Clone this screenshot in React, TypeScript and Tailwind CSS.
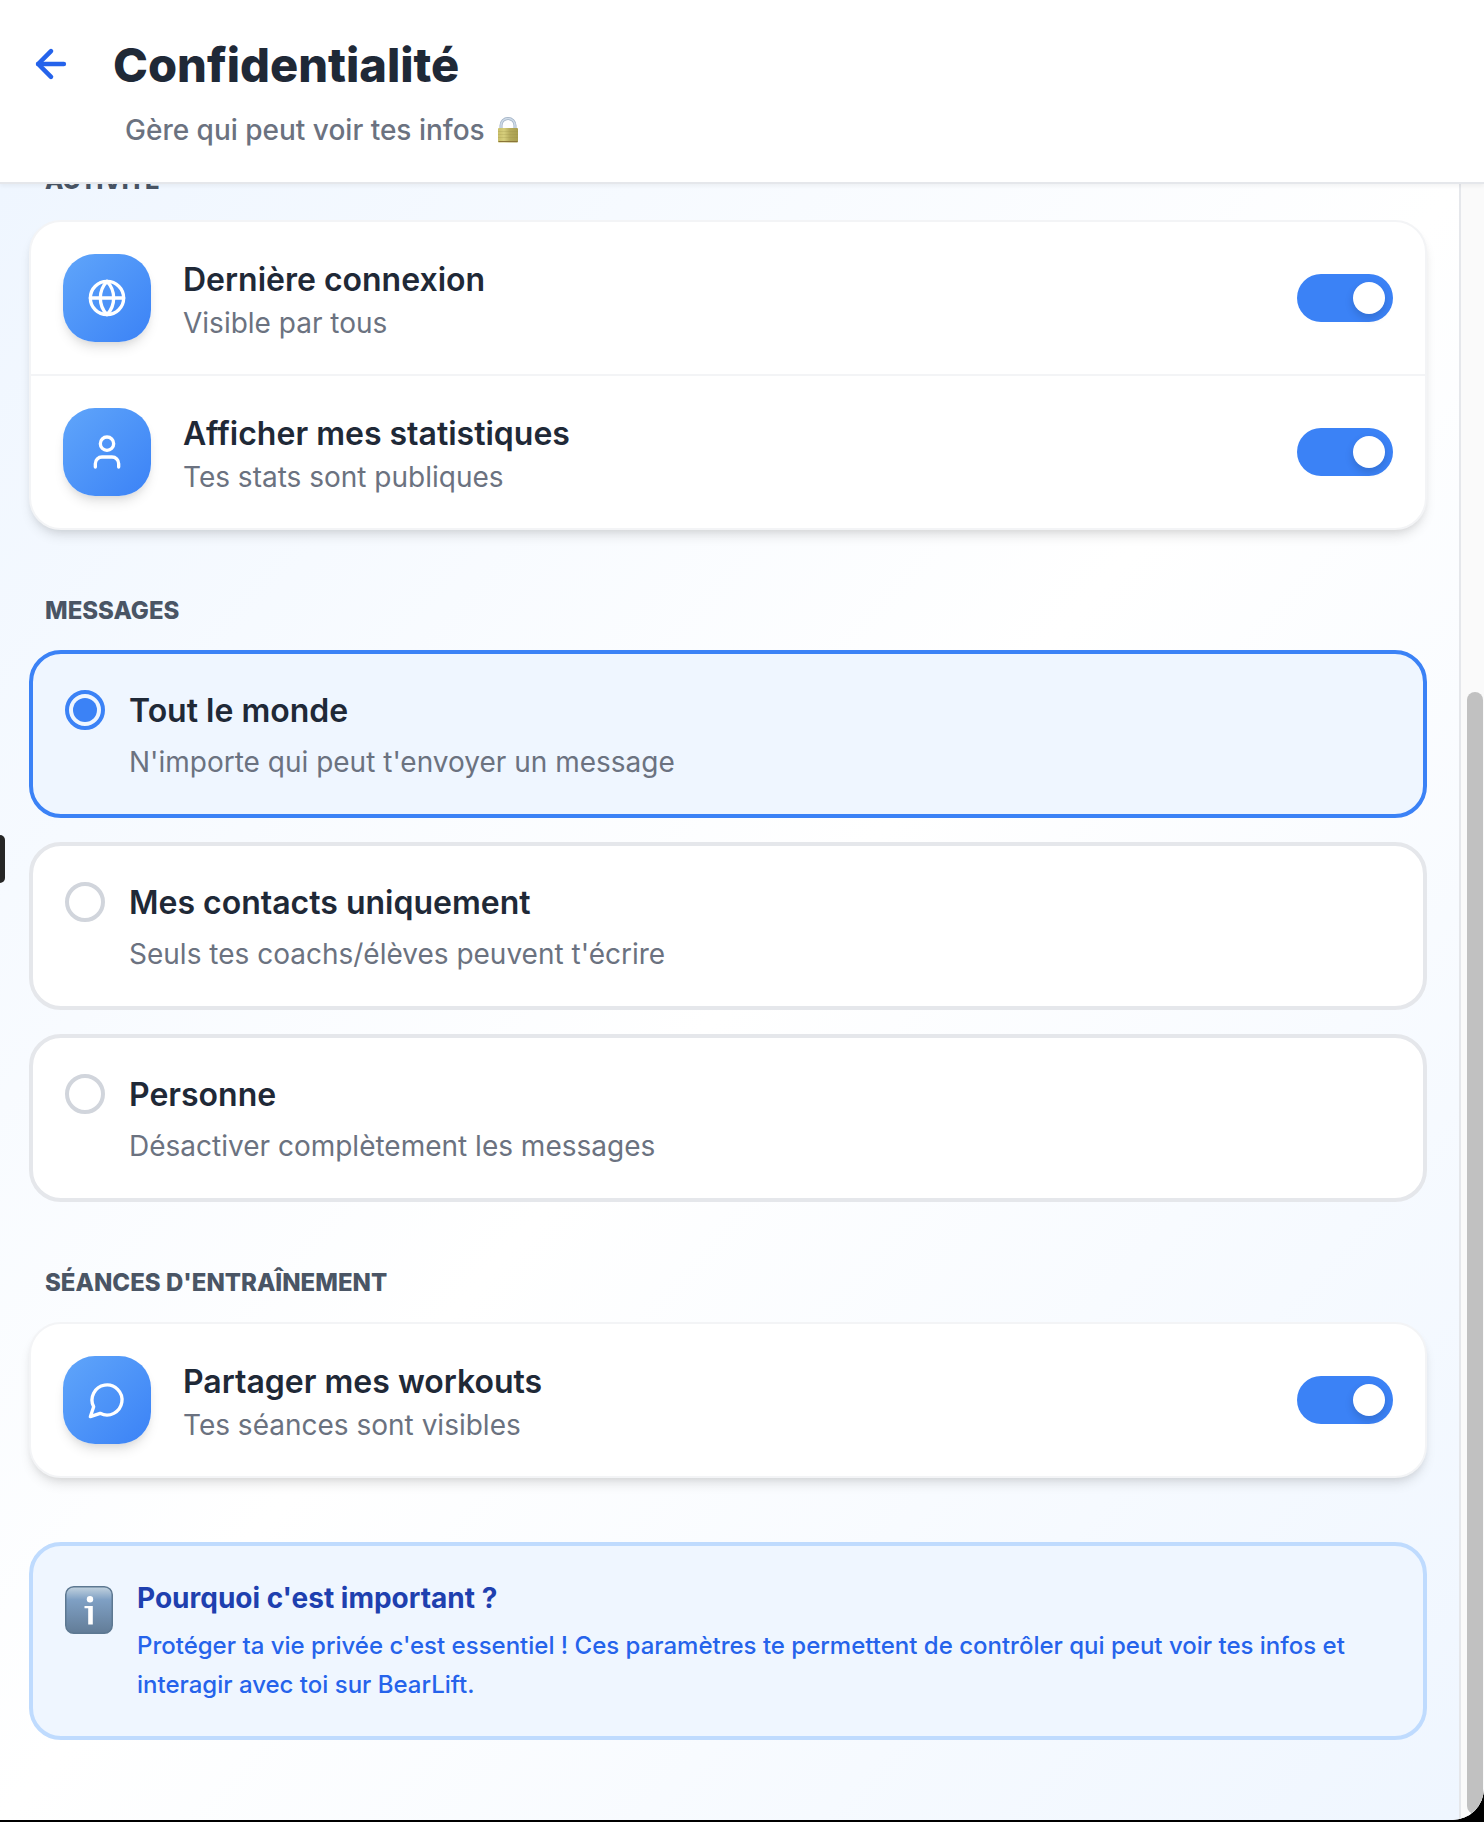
import { useState, type ReactNode } from "react";
import { ArrowLeft, Globe, User } from "lucide-react";

function SectionTitle({ children }: { children: ReactNode }) {
  return <h2 className="mb-[22px] pl-4 text-[24px] leading-[34px] font-extrabold text-gray-600 uppercase">{children}</h2>;
}

function Card({ children }: { children: ReactNode }) {
  return (
    <div className="divide-y-2 divide-gray-100 rounded-[32px] border-2 border-gray-100 bg-white shadow-[0_8px_12px_-2px_rgba(0,0,0,0.1),0_4px_8px_-4px_rgba(0,0,0,0.1)]">
      {children}
    </div>
  );
}

function ToggleRow({ id, icon, title, on, off }: { id: string; icon: ReactNode; title: string; on: string; off: string }) {
  const [checked, setChecked] = useState(true);
  return (
    <div className="flex items-center gap-8 p-8">
      <div className="flex size-[88px] shrink-0 items-center justify-center rounded-[32px] bg-linear-to-br from-[#60a5fa] to-[#3b82f6] text-white shadow-[0_8px_12px_-2px_rgba(0,0,0,0.1),0_4px_8px_-4px_rgba(0,0,0,0.1)]">
        {icon}
      </div>
      <label htmlFor={id} className="min-w-0 flex-1">
        <span className="block text-[32px] leading-[50px] font-[630] text-[#1f2937]">{title}</span>
        <span className="block text-[28px] leading-9 text-[#6b7280]">{checked ? on : off}</span>
      </label>
      <span className="relative flex shrink-0">
        <input
          id={id}
          type="checkbox"
          role="switch"
          checked={checked}
          onChange={(e) => setChecked(e.target.checked)}
          className="peer h-12 w-24 cursor-pointer appearance-none rounded-full bg-gray-300 checked:bg-[#3b82f6]"
        />
        <span className="pointer-events-none absolute top-2 left-2 size-8 rounded-full bg-white shadow-[0_4px_8px_rgba(0,0,0,0.15)] peer-checked:left-14" />
      </span>
    </div>
  );
}

const options = [
  { value: "all", title: "Tout le monde", text: "N'importe qui peut t'envoyer un message" },
  { value: "contacts", title: "Mes contacts uniquement", text: "Seuls tes coachs/élèves peuvent t'écrire" },
  { value: "none", title: "Personne", text: "Désactiver complètement les messages" },
];

function ChatIcon() {
  return (
    <svg className="size-10" viewBox="0 0 24 24" fill="none" stroke="currentColor" strokeWidth="2" strokeLinecap="round" strokeLinejoin="round" aria-hidden="true">
      <path d="M7.9 20A9 9 0 1 0 4 16.1L2 22Z" />
    </svg>
  );
}

function LockIcon() {
  return (
    <svg className="h-[26px] w-[22px] shrink-0" viewBox="0 0 22 26" aria-hidden="true">
      <defs>
        <linearGradient id="lockBody" x1="0" x2="1" y1="0" y2="0">
          <stop offset="0" stopColor="#c9bf6a" />
          <stop offset="0.3" stopColor="#d6ce7c" />
          <stop offset="0.6" stopColor="#b5ab5c" />
          <stop offset="1" stopColor="#a89e50" />
        </linearGradient>
      </defs>
      <path d="M4 12V8.500a7 7 0 0 1 14 0V12" fill="none" stroke="#9fb0c4" strokeWidth="3" />
      <path d="M4 12V8.500a7 7 0 0 1 14 0V12" fill="none" stroke="#cfdbe8" strokeWidth="1.5" />
      <rect x="1" y="11" width="20" height="14.500" rx="1" fill="url(#lockBody)" />
      <path d="M1 14.500h20M1 17.500h20M1 20.500h20" stroke="#8f8540" strokeOpacity="0.2" />
      <path d="M1.500 24.500h19" stroke="#8a7438" />
    </svg>
  );
}

function InfoIcon() {
  return (
    <svg className="mt-2 size-12 shrink-0" viewBox="0 0 48 48" aria-hidden="true">
      <defs>
        <linearGradient id="infoBg" x1="0" x2="0" y1="0" y2="1">
          <stop offset="0" stopColor="#c3d3df" />
          <stop offset="0.28" stopColor="#7fa0c4" />
          <stop offset="1" stopColor="#627c97" />
        </linearGradient>
      </defs>
      <rect x="0.75" y="0.75" width="46.500" height="46.500" rx="8" fill="url(#infoBg)" stroke="#5d7891" strokeWidth="1.500" />
      <circle cx="25" cy="13.300" r="3.200" fill="#fff" />
      <path d="M19.500 20H27.800V38.500H23.200V22.300H19.500Z" fill="#fff" />
    </svg>
  );
}

export default function App() {
  const [who, setWho] = useState("all");
  return (
    <div className="flex min-h-screen bg-black pb-0.5 font-['Inter',sans-serif]">
      <div className="relative flex min-w-0 flex-1 flex-col overflow-hidden rounded-br-[32px] bg-white">
        <header className="relative z-10 border-b-2 border-gray-200 bg-white pt-8 pb-8 shadow-[0_2px_4px_rgba(0,0,0,0.05)]">
          <div className="flex items-start pl-[27px]">
            <button type="button" aria-label="Retour" className="mt-2 flex size-12 items-center justify-center text-[#2563eb]">
              <ArrowLeft className="size-11" strokeWidth={2.5} />
            </button>
            <h1 className="ml-[38px] text-[47px] leading-[66px] font-extrabold text-[#1f2937]">Confidentialité</h1>
          </div>
          <p className="mt-3 flex items-center gap-3 pl-[125px] text-[28px] leading-10 font-medium text-[#6b7280]">
            Gère qui peut voir tes infos
            <LockIcon />
          </p>
        </header>

        <div className="flex flex-1">
          <main className="flex min-w-0 flex-1 flex-col gap-16 bg-linear-to-br from-[#eff6ff] via-white to-[#eff6ff] pr-8 pb-20 pl-[29px]">
            <section className="-mt-5">
              <SectionTitle>Activité</SectionTitle>
              <Card>
                <ToggleRow id="last-seen" icon={<Globe className="size-10" />} title="Dernière connexion" on="Visible par tous" off="Masquée" />
                <ToggleRow id="stats" icon={<User className="size-10" />} title="Afficher mes statistiques" on="Tes stats sont publiques" off="Tes stats sont privées" />
              </Card>
            </section>

            <section>
              <SectionTitle>Messages</SectionTitle>
              <div className="flex flex-col gap-6">
                {options.map((o) => (
                  <label
                    key={o.value}
                    className="flex cursor-pointer items-start gap-6 rounded-[32px] border-4 border-gray-200 bg-white p-8 has-checked:border-[#3b82f6] has-checked:bg-[#eff6ff]"
                  >
                    <span className="relative mt-1 flex size-10 shrink-0 items-center justify-center">
                      <input
                        type="radio"
                        name="messages"
                        value={o.value}
                        checked={who === o.value}
                        onChange={() => setWho(o.value)}
                        className="peer size-10 appearance-none rounded-full border-4 border-gray-300 checked:border-[#3b82f6]"
                      />
                      <span className="pointer-events-none absolute hidden size-6 rounded-full bg-[#3b82f6] peer-checked:block" />
                    </span>
                    <span>
                      <span className="mb-1.5 block text-[32px] leading-[50px] font-[630] text-[#1f2937]">{o.title}</span>
                      <span className="block text-[28px] leading-10 text-[#6b7280]">{o.text}</span>
                    </span>
                  </label>
                ))}
              </div>
            </section>

            <section>
              <SectionTitle>Séances d'entraînement</SectionTitle>
              <Card>
                <ToggleRow id="workouts" icon={<ChatIcon />} title="Partager mes workouts" on="Tes séances sont visibles" off="Tes séances sont masquées" />
              </Card>
            </section>

            <aside className="flex items-start gap-6 rounded-[32px] border-4 border-[#bfdbfe] bg-[#eff6ff] p-8">
              <InfoIcon />
              <div>
                <h3 className="mb-2 text-[28px] leading-10 font-bold text-[#1e40af]">Pourquoi c'est important ?</h3>
                <p className="text-[24px] leading-[39px] font-medium text-[#2563eb]">
                  Protéger ta vie privée c'est essentiel ! Ces paramètres te permettent de contrôler qui peut voir tes infos et interagir avec toi sur BearLift.
                </p>
              </div>
            </aside>
          </main>

          <div className="flex w-[25px] shrink-0 flex-col border-l-2 border-gray-200 bg-[#fafafa] pr-px pl-1.5">
            <div className="mt-[508px] mb-1.5 flex-1 rounded-full bg-[#c1c1c1]" />
          </div>
        </div>
        <div className="absolute top-[835px] left-0 h-12 w-[5px] rounded-r-md bg-[#262626]" />
      </div>
    </div>
  );
}
